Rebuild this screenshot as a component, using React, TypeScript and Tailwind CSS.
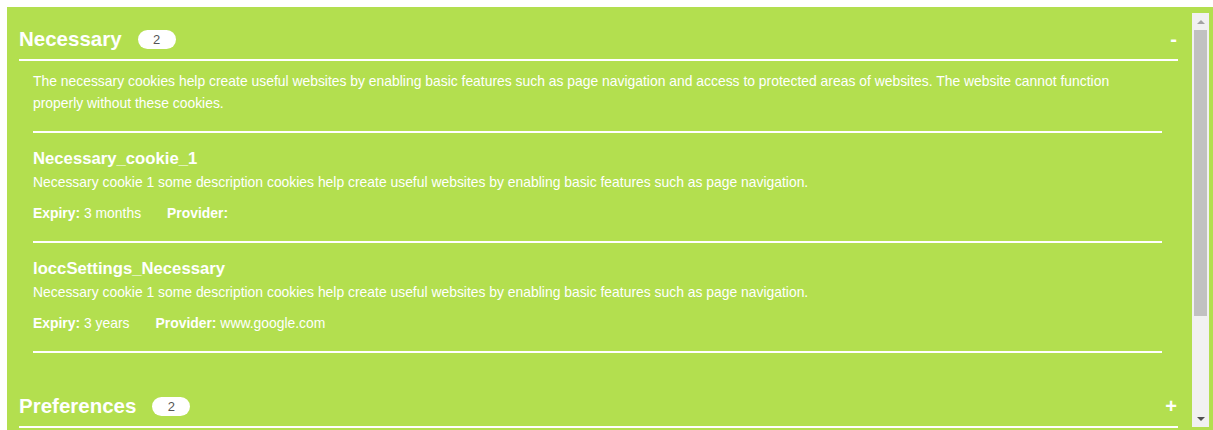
import { useState } from 'react';

type Cookie = {
  name: string;
  description: string;
  expiry: string;
  provider: string;
};

const necessaryCookies: Cookie[] = [
  {
    name: 'Necessary_cookie_1',
    description:
      'Necessary cookie 1 some description cookies help create useful websites by enabling basic features such as page navigation.',
    expiry: '3 months',
    provider: '',
  },
  {
    name: 'loccSettings_Necessary',
    description:
      'Necessary cookie 1 some description cookies help create useful websites by enabling basic features such as page navigation.',
    expiry: '3 years',
    provider: 'www.google.com',
  },
];

function CategoryHeader({ title, count, open, onToggle }: { title: string; count: number; open: boolean; onToggle: () => void }) {
  return (
    <button
      type="button"
      onClick={onToggle}
      className="w-full flex items-center h-8 border-b-2 border-white text-white cursor-pointer box-content pb-1"
    >
      <span className="text-[20.5px] font-bold leading-8">{title}</span>
      <span className="ml-4 w-[38px] h-[19px] rounded-full bg-white text-[#555] text-[13px] leading-[19px] text-center">
        {count}
      </span>
      <span className="ml-auto mr-[1px] text-[20px] font-bold leading-8">{open ? '-' : '+'}</span>
    </button>
  );
}

function CookieRow({ cookie }: { cookie: Cookie }) {
  return (
    <div className="pt-4 pb-[18px] border-b-2 border-white">
      <div className="text-[16.7px] font-bold leading-5">{cookie.name}</div>
      <div className="mt-[3px] text-[13.9px] leading-5">{cookie.description}</div>
      <div className="mt-[11px] text-[13.9px] leading-5 flex gap-[26px]">
        <span>
          <b>Expiry:</b> {cookie.expiry}
        </span>
        <span>
          <b>Provider:</b> {cookie.provider}
        </span>
      </div>
    </div>
  );
}

function Scrollbar() {
  return (
    <div className="w-[17px] mt-[6px] mb-[3px] bg-[#f1f1f1] flex flex-col items-center shrink-0">
      <div className="h-[17px] flex items-center justify-center">
        <div className="w-0 h-0 border-l-[4px] border-r-[4px] border-b-[4px] border-l-transparent border-r-transparent border-b-[#a3a3a3]" />
      </div>
      <div className="w-[13px] h-[286px] bg-[#c1c1c1]" />
      <div className="flex-1" />
      <div className="h-[17px] flex items-center justify-center">
        <div className="w-0 h-0 border-l-[4px] border-r-[4px] border-t-[4px] border-l-transparent border-r-transparent border-t-[#505050]" />
      </div>
    </div>
  );
}

export default function App() {
  const [open, setOpen] = useState({ necessary: true, preferences: false });

  return (
    <div className="w-[1213px] h-[430px] bg-white pt-[7px] pl-[7px] overflow-hidden font-['Liberation_Sans',Arial,sans-serif]">
      <div className="h-[423px] bg-[#b3df4f] flex overflow-hidden">
        <div className="flex-1 pl-3 pr-[14px] pt-4 text-white">
          <CategoryHeader
            title="Necessary"
            count={2}
            open={open.necessary}
            onToggle={() => setOpen((o) => ({ ...o, necessary: !o.necessary }))}
          />
          {open.necessary && (
            <div className="pl-[14px] pr-4 pb-[21px]">
              <p className="mt-[9px] pb-[17px] text-[13.9px] leading-[22px] border-b-2 border-white">
                The necessary cookies help create useful websites by enabling basic features such as page navigation and access to
                protected areas of websites. The website cannot function properly without these cookies.
              </p>
              {necessaryCookies.map((c) => (
                <CookieRow key={c.name} cookie={c} />
              ))}
            </div>
          )}
          <div className="pt-4">
            <CategoryHeader
              title="Preferences"
              count={2}
              open={open.preferences}
              onToggle={() => setOpen((o) => ({ ...o, preferences: !o.preferences }))}
            />
          </div>
        </div>
        <Scrollbar />
        <div className="w-1 shrink-0" />
      </div>
    </div>
  );
}
